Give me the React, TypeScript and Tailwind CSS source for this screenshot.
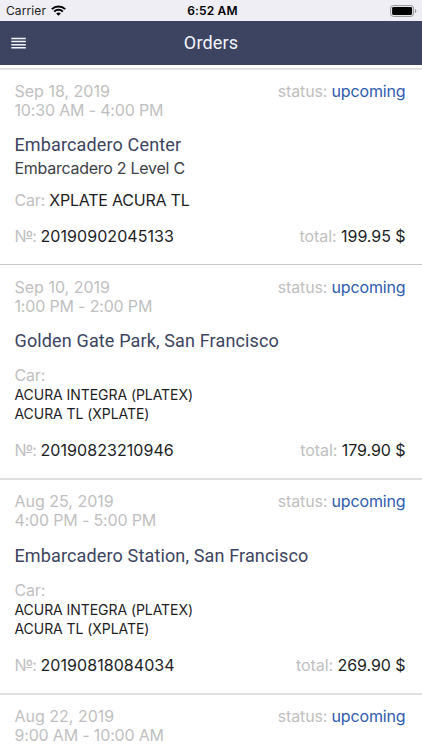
import React from "react";

type Order = {
  date: string;
  time: string;
  place: string;
  level?: string;
  car?: string;
  cars?: string[];
  number?: string;
  total?: string;
  rule: string;
  titleGap: string;
};

const orders: Order[] = [
  { date: "Sep 18, 2019", time: "10:30 AM - 4:00 PM", place: "Embarcadero Center", level: "Embarcadero 2 Level C", car: "XPLATE ACURA TL", number: "20190902045133", total: "199.95 $", rule: "h-[196px] border-t-2 border-[#e2e2e3] pt-[12px]", titleGap: "mt-[13px]" },
  { date: "Sep 10, 2019", time: "1:00 PM - 2:00 PM", place: "Golden Gate Park, San Francisco", cars: ["ACURA INTEGRA (PLATEX)", "ACURA TL (XPLATE)"], number: "20190823210946", total: "179.90 $", rule: "h-[214px] border-t border-[#c8c8c9] pt-[13px]", titleGap: "mt-[13px]" },
  { date: "Aug 25, 2019", time: "4:00 PM - 5:00 PM", place: "Embarcadero Station, San Francisco", cars: ["ACURA INTEGRA (PLATEX)", "ACURA TL (XPLATE)"], number: "20190818084034", total: "269.90 $", rule: "h-[215px] border-t-2 border-[#e0e0e1] pt-[12px]", titleGap: "mt-[14px]" },
  { date: "Aug 22, 2019", time: "9:00 AM - 10:00 AM", place: "", rule: "h-[57px] border-t-2 border-[#e0e0e1] pt-[12px]", titleGap: "mt-[13px]" },
];

function StatusBar() {
  return (
    <div className="flex h-[21px] items-center justify-between bg-[#efeef4] pl-[6px] pr-[5px] text-black">
      <div className="flex w-[100px] items-center gap-[5px]">
        <span className="pt-px text-[12px] tracking-[0.1px] text-[#222]">Carrier</span>
        <svg width="15" height="11" viewBox="0 0 15 11" fill="none" stroke="#000" strokeWidth="2">
          <path d="M.8 4.1a9.6 9.6 0 0 1 13.4 0M3.2 6.6a6.1 6.1 0 0 1 8.6 0" />
          <path d="M7.5 10.8 5.2 8.5a3.3 3.3 0 0 1 4.6 0z" fill="#000" stroke="none" />
        </svg>
      </div>
      <span className="pl-[2px] text-[12px] font-semibold tracking-[0.15px]">6:52 AM</span>
      <div className="flex w-[100px] justify-end">
        <svg width="27" height="12" viewBox="0 0 27 12">
          <rect x=".6" y=".6" width="23" height="10.8" rx="2.8" fill="none" stroke="#929296" />
          <rect x="2.1" y="2.1" width="20" height="7.8" rx="1.3" />
          <path d="M25 4v4c1.8-.6 1.8-3.4 0-4z" fill="#929296" />
        </svg>
      </div>
    </div>
  );
}

function NavBar() {
  return (
    <header className="grid h-[44px] grid-cols-[1fr_auto_1fr] items-center bg-[#3c4461] px-[11px]">
      <button aria-label="Menu">
        <svg width="15" height="12" viewBox="0 0 15 12" stroke="#f3f4f8" strokeWidth="1.5">
          <path d="M.3 1.5h14.5M.3 4.6h14.5M.3 7.7h14.5M.3 10.8h14.5" />
        </svg>
      </button>
      <h1 className="font-['Roboto',sans-serif] text-[18px] leading-[22px] tracking-[0.15px] text-[#f5f6fa]">Orders</h1>
    </header>
  );
}

function OrderCard({ order }: { order: Order }) {
  return (
    <article className={"flex shrink-0 flex-col pl-[14.5px] pr-[16.5px] text-[16px] leading-[19px] tracking-[-0.15px] text-[#1d1d1f] " + order.rule}>
      <div className="flex justify-between text-[#bfbfc1]">
        <div>
          <p className="tracking-[0px]">{order.date}</p>
          <p className="tracking-[-0.17px]">{order.time}</p>
        </div>
        <p>status: <span className="text-[#2d5bae]">upcoming</span></p>
      </div>
      {order.number && (
        <>
          <h2 className={"font-['Roboto',sans-serif] text-[18px] leading-[24px] tracking-[0.14px] text-[#3c4461] " + order.titleGap}>{order.place}</h2>
          {order.level && <p className="mt-px leading-[21px] tracking-[-0.27px] text-[#3e4248]">{order.level}</p>}
          {order.car && <p className="mt-[12px] tracking-[-0.22px]"><span className="text-[#bfbfc1]">Car:</span> {order.car}</p>}
          {order.cars && (
            <div className="mt-[13px]">
              <p className="text-[#bfbfc1]">Car:</p>
              {order.cars.map((car) => <p key={car} className="text-[14px] tracking-[-0.06px]">{car}</p>)}
            </div>
          )}
          <div className={"flex justify-between " + (order.cars ? "mt-[18px]" : "mt-[17px]")}>
            <p className="tracking-[0.06px]"><span className="tracking-[-0.8px] text-[#bfbfc1]">N<span className="underline decoration-1 underline-offset-[-4px] [text-decoration-skip-ink:none]">º</span>:</span> {order.number}</p>
            <p className="tracking-[-0.06px]"><span className="text-[#bfbfc1]">total:</span> {order.total}</p>
          </div>
        </>
      )}
    </article>
  );
}

export default function App() {
  return (
    <div className="flex h-[750px] w-[422px] flex-col overflow-hidden bg-white font-['Inter',sans-serif]">
      <StatusBar />
      <NavBar />
      <main className="flex flex-col overflow-hidden pt-[3px]">
        {orders.map((order) => <OrderCard key={order.date} order={order} />)}
      </main>
    </div>
  );
}
